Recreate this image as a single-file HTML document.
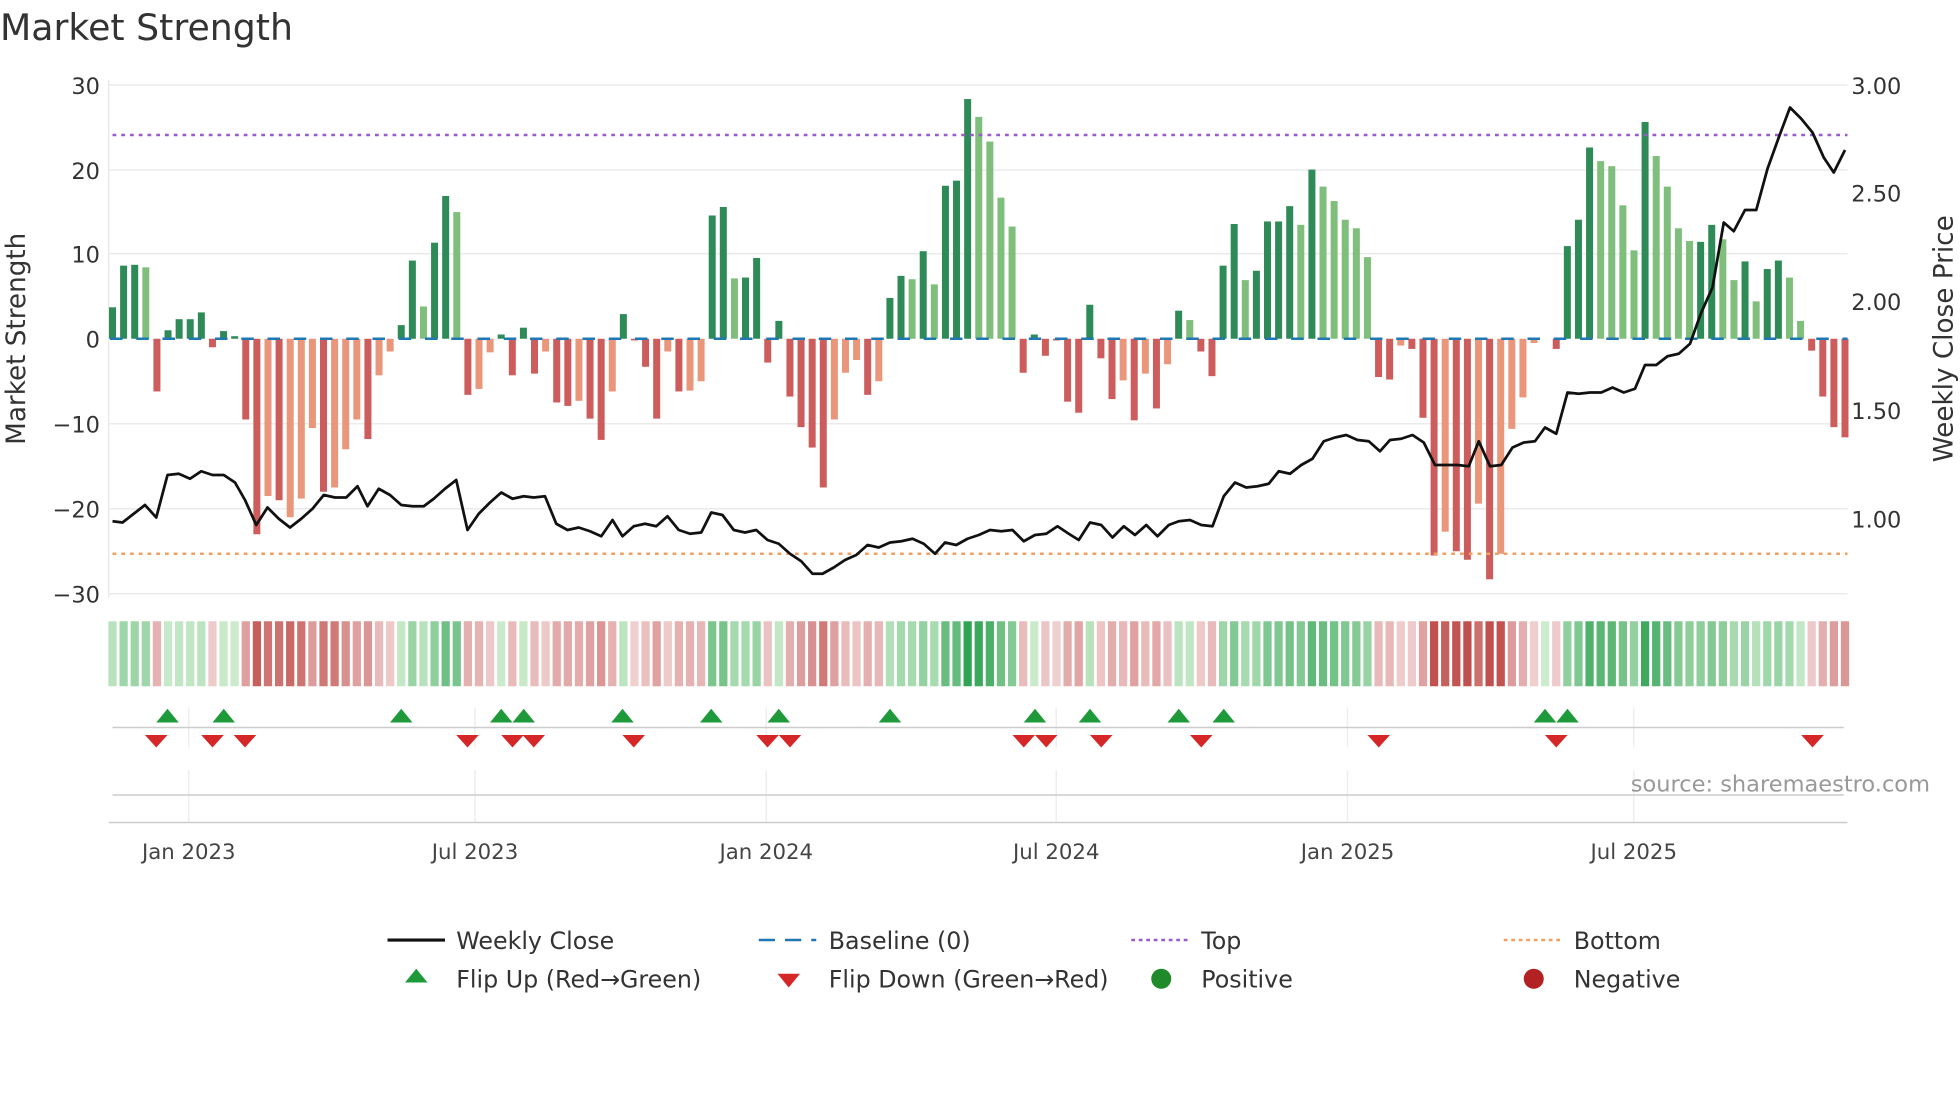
<!DOCTYPE html>
<html><head><meta charset="utf-8"><style>
html,body{margin:0;padding:0;background:#fff;}
svg{display:block;font-family:"DejaVu Sans","Liberation Sans",sans-serif;}
</style></head><body>
<svg id="s" width="1960" height="1102" viewBox="0 0 1568 881.6" xmlns="http://www.w3.org/2000/svg">
<rect width="1568" height="882" fill="#fff"/>
<text x="0" y="32" font-size="29" fill="#333">Market Strength</text>
<g id="grid" stroke="#ebebeb" stroke-width="1.2"></g>
<line x1="87" y1="64" x2="87" y2="478" stroke="#e6e6e6"/>
<g id="bars"></g>
<line x1="90" y1="108" x2="1478" y2="108" stroke="#9b59d0" stroke-width="2" stroke-dasharray="3,4"/>
<line x1="90" y1="443" x2="1478" y2="443" stroke="#f0a060" stroke-width="2" stroke-dasharray="3,4"/>
<line x1="88" y1="271" x2="1478" y2="271" stroke="#1f77b4" stroke-width="2" stroke-dasharray="10,11"/>
<polyline id="price" fill="none" stroke="#111" stroke-width="2.2" stroke-linejoin="round"/>
<g font-size="18" fill="#333" text-anchor="end">
<text x="80" y="75">30</text><text x="80" y="143">20</text><text x="80" y="210">10</text><text x="80" y="278">0</text>
<text x="80" y="346">−10</text><text x="80" y="414">−20</text><text x="80" y="482">−30</text></g>
<g font-size="18" fill="#333">
<text x="1481" y="75">3.00</text><text x="1481" y="161">2.50</text><text x="1481" y="248">2.00</text>
<text x="1481" y="335">1.50</text><text x="1481" y="422">1.00</text></g>
<text transform="translate(20,271) rotate(-90)" font-size="21" fill="#333" text-anchor="middle">Market Strength</text>
<text transform="translate(1562,271) rotate(-90)" font-size="21" fill="#333" text-anchor="middle">Weekly Close Price</text>
<g id="heat"></g>
<g stroke="#eee" stroke-width="1.2">
<line x1="151" y1="566" x2="151" y2="598"/><line x1="380" y1="566" x2="380" y2="598"/><line x1="613" y1="566" x2="613" y2="598"/><line x1="845" y1="566" x2="845" y2="598"/><line x1="1078" y1="566" x2="1078" y2="598"/><line x1="1307" y1="566" x2="1307" y2="598"/>
<line x1="151" y1="616" x2="151" y2="658"/><line x1="380" y1="616" x2="380" y2="658"/><line x1="613" y1="616" x2="613" y2="658"/><line x1="845" y1="616" x2="845" y2="658"/><line x1="1078" y1="616" x2="1078" y2="658"/><line x1="1307" y1="616" x2="1307" y2="658"/>
</g>
<line x1="90" y1="582" x2="1475" y2="582" stroke="#ccc" stroke-width="1.2"/>
<line x1="90" y1="636" x2="1475" y2="636" stroke="#ccc" stroke-width="1.2"/>
<line x1="87" y1="658" x2="1478" y2="658" stroke="#ccc" stroke-width="1.2"/>
<g id="marks"></g>
<text x="1544" y="633" font-size="18" fill="#999" text-anchor="end">source: sharemaestro.com</text>
<g font-size="17" fill="#444" text-anchor="middle">
<text x="151" y="687">Jan 2023</text><text x="380" y="687">Jul 2023</text><text x="613" y="687">Jan 2024</text>
<text x="845" y="687">Jul 2024</text><text x="1078" y="687">Jan 2025</text><text x="1307" y="687">Jul 2025</text></g>
<g font-size="19" fill="#333">
<line x1="310" y1="752" x2="356" y2="752" stroke="#111" stroke-width="2.5"/>
<text x="365" y="759">Weekly Close</text>
<line x1="607" y1="752" x2="653" y2="752" stroke="#1f77b4" stroke-width="2" stroke-dasharray="13,8"/>
<text x="663" y="759">Baseline (0)</text>
<line x1="905" y1="752" x2="951" y2="752" stroke="#9b59d0" stroke-width="2" stroke-dasharray="3,3"/>
<text x="961" y="759">Top</text>
<line x1="1203" y1="752" x2="1249" y2="752" stroke="#f0a060" stroke-width="2" stroke-dasharray="3,3"/>
<text x="1259" y="759">Bottom</text>
<polygon points="333,775 342,786 324,786" fill="#1f9a3a"/>
<text x="365" y="790">Flip Up (Red→Green)</text>
<polygon points="622,779 640,779 631,790" fill="#d62728"/>
<text x="663" y="790">Flip Down (Green→Red)</text>
<circle cx="929" cy="783" r="8" fill="#1f8a2a"/>
<text x="961" y="790">Positive</text>
<circle cx="1227" cy="783" r="8" fill="#b22222"/>
<text x="1259" y="790">Negative</text>
</g>
</svg>
<script>
var NS="http://www.w3.org/2000/svg";
function el(t,a,p){var e=document.createElementNS(NS,t);for(var k in a)e.setAttribute(k,a[k]);document.getElementById(p).appendChild(e);return e;}
[68,136,203,339,407,475].forEach(function(y){el("line",{x1:87,x2:1478,y1:y,y2:y},"grid");});
var B="3.7d 8.6d 8.7d 8.4l -6.2r 1d 2.3d 2.3d 3.1d -1r 0.9d 0.3d -9.5r -23r -18.5s -19r -21s -18.8s -10.5s -18r -17.5s -13s -9.5s -11.8r -4.3s -1.5s 1.6d 9.2d 3.8l 11.3d 16.8d 14.9l -6.6r -5.9s -1.6s 0.5d -4.3r 1.3d -4.1r -1.5s -7.5r -7.9r -7.3s -9.4r -11.9r -6.2s 2.9d -0.2r -3.3r -9.4r -1.5s -6.2r -6.1s -5s 14.5d 15.5d 7.1l 7.2d 9.5d -2.8r 2.1d -6.8r -10.4r -12.8r -17.5r -9.5s -4s -2.5s -6.6r -5s 4.8d 7.4d 7l 10.3d 6.4l 18d 18.6d 28.2d 26.1l 23.2l 16.6l 13.2l -4r 0.5d -2r -0.2r -7.4r -8.7r 4d -2.3r -7.1r -4.9s -9.6r -4.1s -8.2r -3s 3.3d 2.2l -1.5r -4.4r 8.6d 13.5d 6.9l 8d 13.8d 13.8d 15.6d 13.4l 19.9d 17.9l 16.2l 14l 13l 9.6l -4.5r -4.8r -0.8s -1.2r -9.3r -25.5r -22.7s -25r -26r -19.4s -28.3r -25.3s -10.6s -6.9s -0.5s 0l -1.2r 10.9d 14d 22.5d 20.9l 20.3l 15.7l 10.4l 25.5d 21.5l 17.9l 13l 11.5l 11.4d 13.4d 11.7l 6.9l 9.1d 4.4l 8.2d 9.2d 7.2l 2.1l -1.4r -6.8r -10.4r -11.6r".split(" ");
var n=B.length,st=(1476-90)/(n-1);
var col={d:"#2e8b57",l:"#7fbf7b",r:"#cd5c5c",s:"#e9967a"};
function mix(a,b,t){var r=[];for(var i=0;i<3;i++)r.push(Math.round(a[i]+(b[i]-a[i])*t));return "rgb("+r.join(",")+")";}
B.forEach(function(s,i){var v=parseFloat(s),t=s.slice(-1),x=90+i*st;
 var y=271-v*6.8;
 if(Math.abs(v)>0.05) el("rect",{x:x-2.8,width:5.6,y:Math.min(y,271),height:Math.abs(v*6.8),fill:col[t]},"bars");
 var c=v>=0?mix([205,236,205],[49,163,84],Math.min(1,v/28)):mix([240,208,208],[192,80,77],Math.min(1,-v/26));
 el("rect",{x:x-3.3,width:6.6,y:497,height:52,fill:c},"heat");
});
var P=[[90,417],[98,418],[107,411],[116,404],[125,414],[134,380],[143,379],[152,383],[161,377],[170,380],[179,380],[188,386],[196,400],[205,420],[214,406],[223,415],[232,422],[241,415],[250,407],[259,396],[268,398],[277,398],[286,389],[294,405],[303,391],[312,396],[321,404],[330,405],[339,405],[347,399],[356,391],[365,384],[374,424],[383,411],[392,402],[401,394],[410,399],[419,397],[427,398],[436,397],[445,419],[454,424],[463,422],[472,425],[481,429],[490,416],[498,429],[507,421],[516,419],[525,421],[534,413],[543,424],[552,427],[561,426],[569,410],[578,412],[587,424],[596,426],[605,424],[614,432],[623,435],[632,443],[641,449],[650,459],[658,459],[667,454],[676,448],[685,444],[694,436],[703,438],[712,434],[721,433],[730,431],[739,435],[748,443],[756,434],[765,436],[774,431],[783,428],[792,424],[801,425],[810,424],[819,433],[828,428],[837,427],[846,421],[855,427],[863,432],[872,418],[881,420],[890,430],[899,421],[908,428],[917,420],[926,429],[935,420],[943,417],[952,416],[961,420],[970,421],[979,397],[988,386],[997,390],[1006,389],[1015,387],[1023,377],[1032,379],[1041,372],[1050,367],[1059,353],[1068,350],[1077,348],[1086,352],[1095,353],[1104,361],[1112,352],[1121,351],[1130,348],[1139,354],[1148,372],[1157,372],[1166,372],[1175,373],[1183,353],[1192,373],[1201,372],[1210,358],[1219,354],[1228,353],[1236,342],[1245,347],[1254,314],[1263,315],[1272,314],[1281,314],[1290,310],[1299,314],[1308,311],[1316,292],[1325,292],[1334,285],[1343,283],[1352,275],[1361,250],[1370,230],[1379,178],[1387,185],[1396,168],[1405,168],[1414,135],[1423,110],[1432,86],[1441,95],[1450,106],[1459,126],[1467,138],[1476,120]];
document.getElementById("price").setAttribute("points",P.map(function(p){return p.join(",");}).join(" "));
[134,179,321,401,419,498,569,623,712,828,872,943,979,1236,1254].forEach(function(x){el("polygon",{points:(x)+",567 "+(x+9)+",578 "+(x-9)+",578",fill:"#1f9a3a"},"marks");});
[125,170,196,374,410,427,507,614,632,819,837,881,961,1103,1245,1450].forEach(function(x){el("polygon",{points:(x-9)+",588 "+(x+9)+",588 "+x+",598",fill:"#d62728"},"marks");});
</script>
</body></html>
